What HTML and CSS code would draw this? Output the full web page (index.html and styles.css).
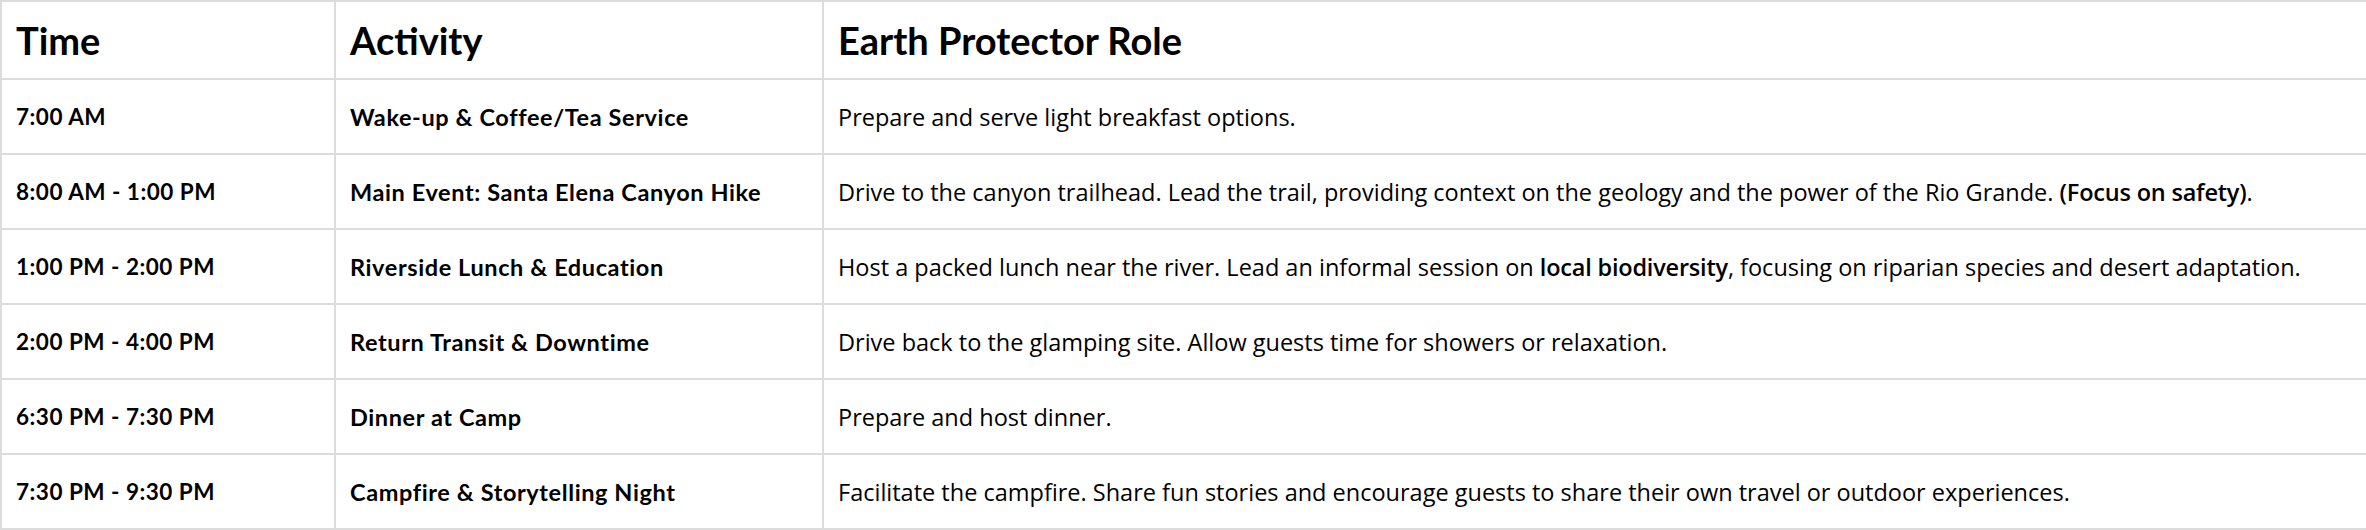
FILE: index.html
```html
<!DOCTYPE html>
<html lang="en">
<head>
<meta charset="utf-8">
<title>Itinerary</title>
<link rel="stylesheet" href="styles.css">
</head>
<body>
<table class="schedule">
  <colgroup>
    <col class="col-time">
    <col class="col-activity">
    <col class="col-role">
  </colgroup>
  <thead>
    <tr class="head-row">
      <th>Time</th>
      <th>Activity</th>
      <th>Earth Protector Role</th>
    </tr>
  </thead>
  <tbody>
    <tr>
      <td class="time">7:00 AM</td>
      <td class="activity">Wake-up &amp; Coffee/Tea Service</td>
      <td class="role">Prepare and serve light breakfast options.</td>
    </tr>
    <tr>
      <td class="time">8:00 AM - 1:00 PM</td>
      <td class="activity">Main Event: Santa Elena Canyon Hike</td>
      <td class="role">Drive to the canyon trailhead. Lead the trail, providing context on the geology and the power of the Rio Grande. <b>(Focus on safety)</b>.</td>
    </tr>
    <tr>
      <td class="time">1:00 PM - 2:00 PM</td>
      <td class="activity">Riverside Lunch &amp; Education</td>
      <td class="role">Host a packed lunch near the river. Lead an informal session on <b>local biodiversity</b>, focusing on riparian species and desert adaptation.</td>
    </tr>
    <tr>
      <td class="time">2:00 PM - 4:00 PM</td>
      <td class="activity">Return Transit &amp; Downtime</td>
      <td class="role">Drive back to the glamping site. Allow guests time for showers or relaxation.</td>
    </tr>
    <tr>
      <td class="time">6:30 PM - 7:30 PM</td>
      <td class="activity">Dinner at Camp</td>
      <td class="role">Prepare and host dinner.</td>
    </tr>
    <tr>
      <td class="time">7:30 PM - 9:30 PM</td>
      <td class="activity">Campfire &amp; Storytelling Night</td>
      <td class="role">Facilitate the campfire. Share fun stories and encourage guests to share their own travel or outdoor experiences.</td>
    </tr>
  </tbody>
</table>
</body>
</html>
```

FILE: styles.css
```css
html, body {
  margin: 0;
  padding: 0;
  background: #ffffff;
}
body {
  font-family: Lato, "Liberation Sans", sans-serif;
  color: #000000;
  overflow: hidden;
}
.schedule {
  border-collapse: collapse;
  table-layout: fixed;
  width: 2368px;
}
.col-time { width: 334px; }
.col-activity { width: 488px; }
.schedule th,
.schedule td {
  border: 2px solid #dcdcdc;
  padding: 0 14px;
  text-align: left;
  vertical-align: middle;
  white-space: nowrap;
}
.schedule th {
  height: 76px;
  font-size: 38px;
  font-weight: 700;
}
.schedule td {
  height: 73px;
}
.schedule td.time {
  font-size: 22.5px;
  font-weight: 700;
  letter-spacing: 0.5px;
}
.schedule td.activity {
  font-size: 23.5px;
  font-weight: 700;
  letter-spacing: 0.6px;
}
.schedule td.role {
  font-family: "Open Sans", Lato, sans-serif;
  font-size: 23.5px;
  font-weight: 400;
}
.schedule td.role b {
  font-weight: 600;
  letter-spacing: -0.2px;
}
```
